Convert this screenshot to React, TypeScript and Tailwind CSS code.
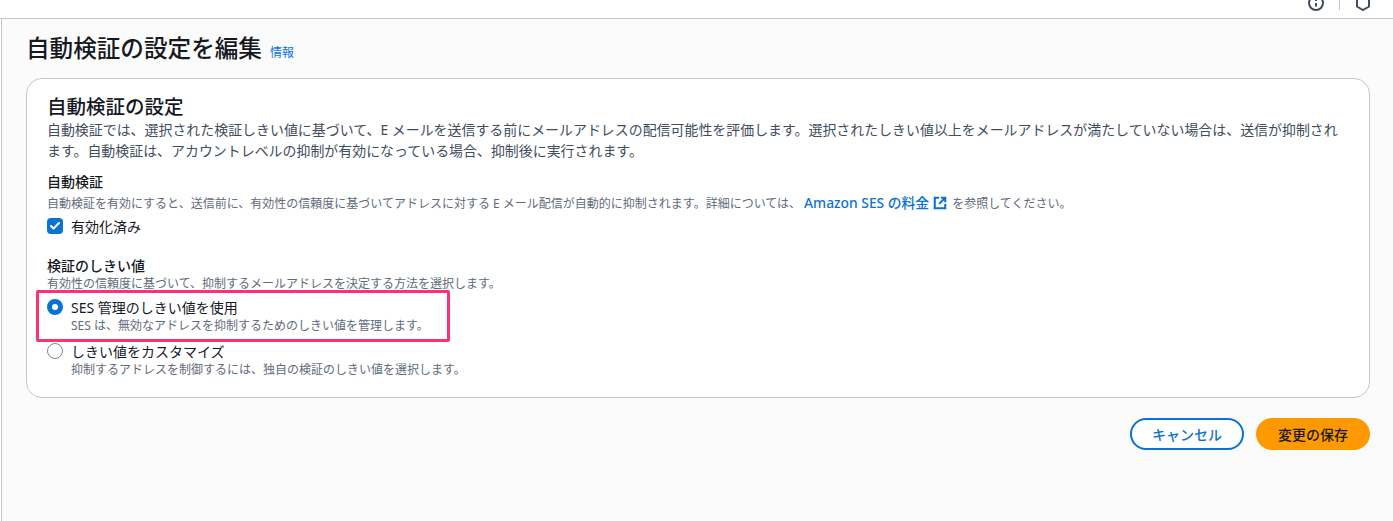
import { Check } from "lucide-react";

function ExternalIcon() {
  return (
    <svg viewBox="0 0 16 16" className="inline-block w-[14px] h-[14px] ml-[4px] mr-[5px] align-[-2px]" fill="none" stroke="#0972d3" strokeWidth="2.4">
      <path d="M14 9v5H2V2h5" />
      <path d="M9 2h5v5" />
      <path d="M14 2L7 9" />
    </svg>
  );
}

function Radio({ checked }: { checked?: boolean }) {
  if (checked) {
    return <span className="mt-[2px] w-4 h-4 rounded-full border-[5px] border-[#0972d3] bg-white shrink-0" />;
  }
  return <span className="mt-[2px] w-4 h-4 rounded-full border border-[#7d8998] bg-white shrink-0" />;
}

function RadioOption({ checked, label, hint }: { checked?: boolean; label: string; hint: string }) {
  return (
    <div className="flex gap-2 h-[44px]">
      <Radio checked={checked} />
      <div>
        <div className="text-[14px] leading-[21px] text-[#16191f]">{label}</div>
        <div className="text-[12px] leading-[16px] text-[#5f6b7a]">{hint}</div>
      </div>
    </div>
  );
}

export default function App() {
  return (
    <div className="relative h-[521px] overflow-hidden bg-white text-[#16191f] font-['Noto_Sans','Noto_Sans_CJK_JP',sans-serif]">
      <header className="h-[19px] border-b border-[#c6c6cd] bg-white flex justify-end items-end pr-[22px] overflow-hidden">
        <div className="flex items-center h-[18px] -mt-[12px]">
          <svg viewBox="0 0 16 16" className="w-4 h-4 -mt-[12px]" fill="none" stroke="#414d5c" strokeWidth="2">
            <circle cx="8" cy="8" r="7" />
            <path d="M8 11.5V8" />
            <path d="M8 4v2" />
          </svg>
          <span className="mx-[15px] w-px h-[10px] -mt-[8px] bg-[#c6c6cd]" />
          <svg viewBox="0 0 16 16" className="w-4 h-4 -mt-[12px]" fill="none" stroke="#414d5c" strokeWidth="2">
            <path d="M8 1l6 3.5v7L8 15l-6-3.5v-7z" />
          </svg>
        </div>
      </header>

      <main className="h-[502px] ml-px border-l border-[#c6c6cd] bg-[#fbfbfc] pl-[24px] pr-[23px]">
        <div className="flex items-baseline gap-[8px] pt-[11px] h-[59px]">
          <h1 className="text-[23.6px] leading-[36px] font-medium">自動検証の設定を編集</h1>
          <a className="text-[12px] text-[#0972d3]">情報</a>
        </div>

        <section className="relative h-[320px] rounded-[16px] border border-[#c6c6cd] bg-white pl-[20px] pr-[21px] pt-[15px]">
          <h2 className="text-[19.5px] leading-[25px] font-medium">自動検証の設定</h2>
          <p className="text-[13.95px] leading-[21px] text-[#414d5c]">
            自動検証では、選択された検証しきい値に基づいて、E メールを送信する前にメールアドレスの配信可能性を評価します。選択されたしきい値以上をメールアドレスが満たしていない場合は、送信が抑制されます。自動検証は、アカウントレベルの抑制が有効になっている場合、抑制後に実行されます。
          </p>

          <div className="mt-[11px]">
            <div className="text-[14px] leading-[20px] font-medium">自動検証</div>
            <div className="text-[12px] leading-[18px] text-[#5f6b7a] mt-[2px]">
              自動検証を有効にすると、送信前に、有効性の信頼度に基づいてアドレスに対する E メール配信が自動的に抑制されます。詳細については、
              <a className="ml-[3px] text-[13.8px] font-medium text-[#0972d3]">Amazon SES の料金</a>
              <ExternalIcon />
              を参照してください。
            </div>
            <div className="flex items-center gap-2 mt-[2px] h-[22px]">
              <span className="w-4 h-4 rounded-[4px] bg-[#0972d3] flex items-center justify-center">
                <Check className="w-3 h-3 text-white" strokeWidth={4} />
              </span>
              <span className="text-[14px] text-[#16191f]">有効化済み</span>
            </div>
          </div>

          <div className="mt-[20px]">
            <div className="text-[14px] leading-[18px] font-medium">検証のしきい値</div>
            <div className="text-[12px] leading-[18px] text-[#5f6b7a] mb-[4px]">
              有効性の信頼度に基づいて、抑制するメールアドレスを決定する方法を選択します。
            </div>
            <RadioOption checked label="SES 管理のしきい値を使用" hint="SES は、無効なアドレスを抑制するためのしきい値を管理します。" />
            <RadioOption label="しきい値をカスタマイズ" hint="抑制するアドレスを制御するには、独自の検証のしきい値を選択します。" />
          </div>

          <div className="absolute left-[9px] top-[211px] w-[414px] h-[52px] border-[3px] border-[#fa3270] rounded-[2px]" />
        </section>

        <div className="flex justify-end gap-[12px] mt-[20px]">
          <button className="w-[114px] h-[32px] rounded-full border-2 border-[#0972d3] bg-white text-[14px] font-medium text-[#0972d3]">
            キャンセル
          </button>
          <button className="w-[114px] h-[32px] rounded-full bg-[#ff9900] text-[14px] font-medium text-[#16191f]">
            変更の保存
          </button>
        </div>
      </main>
    </div>
  );
}
